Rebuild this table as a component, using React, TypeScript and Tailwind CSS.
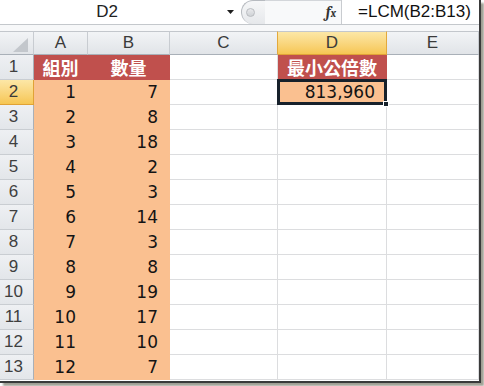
import React from 'react'

const data: [number, number][] = [
  [1, 7], [2, 8], [3, 18], [4, 2], [5, 3], [6, 14],
  [7, 3], [8, 8], [9, 19], [10, 17], [11, 10], [12, 7],
]

const latin = { fontFamily: '"Liberation Sans", Arial, sans-serif' }
const num = { fontFamily: '"DejaVu Sans", "Liberation Sans", sans-serif' }
const cjk = { fontFamily: '"Noto Sans CJK TC", "Noto Sans CJK SC", sans-serif' }

const headCell =
  'h-[24px] flex items-center justify-center border-t border-r border-b border-t-[#c3c7cc] border-r-[#c8ccd1] border-b-[#a9b0b8] bg-gradient-to-b from-[#f2f4f6] to-[#e1e4e8] text-[17px] text-[#3a3a3a]'
const headGold =
  'h-[24px] flex items-center justify-center border-t border-r border-b border-t-[#c3c7cc] border-r-[#e3a93c] border-b-[#e0a236] bg-gradient-to-b from-[#fce7a6] to-[#f6c652] text-[17px] text-[#3a3a3a]'
const rowHead =
  'h-[25px] flex items-center justify-center pr-[6px] border-r border-b border-r-[#a9b0b8] border-b-[#c9cdd2] bg-gradient-to-b from-[#eef0f3] to-[#e3e6ea] text-[17px] text-[#3f3f3f]'
const rowHeadGold =
  'h-[25px] flex items-center justify-center pr-[6px] border-r border-b border-r-[#e0a236] border-b-[#e0a236] bg-gradient-to-b from-[#fce7a6] to-[#f6c652] text-[17px] text-[#3a3a3a]'
const white = 'h-[25px] border-r border-b border-[#dcdddf] bg-white'
const orange =
  'h-[25px] flex items-center justify-end pr-[11px] pt-[1px] border-r border-b border-[#fac090] bg-[#fac090] text-[17px] text-[#141414]'
const red =
  'h-[25px] flex items-center justify-center border-r border-b border-[#c0504d] bg-[#c0504d] text-[18px] font-bold text-white'

export default function App() {
  return (
    <div className="w-[484px] h-[386px] bg-white overflow-hidden">
      <div className="w-[481px] h-[383px] border-r-2 border-b-2 border-[#3a3a3a] shadow-[3px_3px_2px_rgba(80,80,60,0.55)] bg-white">
        {/* formula bar */}
        <div className="flex h-[25px] border-b border-[#c4c8cc]" style={latin}>
          <div className="flex w-[241px] items-center">
            <span className="w-[214px] text-center text-[17px] text-[#222]">D2</span>
            <svg className="ml-[13px]" width="7" height="4" viewBox="0 0 7 4">
              <path d="M0 0h7L3.5 4z" fill="#1e1e1e" />
            </svg>
          </div>
          <div className="flex w-[101px] border-r border-[#c9ccd0]">
            <div className="flex w-[24px] items-center rounded-l-[12px] border-l border-t border-[#b7bbc0] bg-gradient-to-b from-[#f6f7f8] to-[#e6e8eb] pl-[4px]">
              <span className="h-[9px] w-[9px] rounded-full border border-[#b9bcc0] bg-gradient-to-b from-[#e9eaec] to-[#cfd2d6]" />
            </div>
            <div className="flex flex-1 items-center justify-end border-t border-[#d3d6da] bg-[#f8f9fa] pr-[5px]">
              <span className="font-serif text-[15px] font-bold italic text-[#333]">
                f<span className="text-[11px]">x</span>
              </span>
            </div>
          </div>
          <div className="flex flex-1 items-center pl-[16px] text-[17px] text-[#111]">=LCM(B2:B13)</div>
        </div>
        <div className="h-[6px] bg-[#f7f8f9]" />

        {/* sheet */}
        <div className="grid grid-cols-[34px_54px_82px_108px_109px_92px]">
          <div className={headCell + ' relative'}>
            <svg className="absolute right-[5px] bottom-[2px]" width="15" height="14" viewBox="0 0 15 14">
              <path d="M15 0V14H0z" fill="#c3c7cc" />
            </svg>
          </div>
          <div className={headCell} style={latin}>A</div>
          <div className={headCell} style={latin}>B</div>
          <div className={headCell + ' border-r-[#e3a93c]'} style={latin}>C</div>
          <div className={headGold} style={latin}>D</div>
          <div className={headCell} style={latin}>E</div>

          <div className={rowHead} style={latin}>1</div>
          <div className={red} style={cjk}>組別</div>
          <div className={red} style={cjk}>數量</div>
          <div className={white} />
          <div className={red} style={cjk}>最小公倍數</div>
          <div className={white} />

          {data.map(([g, q], i) => (
            <React.Fragment key={g}>
              <div className={i === 0 ? rowHeadGold : rowHead} style={latin}>{i + 2}</div>
              <div className={orange} style={num}>{g}</div>
              <div className={orange} style={num}>{q}</div>
              <div className={white} />
              {i === 0 ? (
                <div className={orange + ' relative'} style={num}>
                  813,960
                  <span className="absolute -left-[1px] -top-[1px] -right-[1px] -bottom-[1px] border-[3px] border-[#17212b]" />
                  <span className="absolute -right-[3px] -bottom-[3px] h-[6px] w-[6px] border border-white bg-[#17212b]" />
                </div>
              ) : (
                <div className={white} />
              )}
              <div className={white} />
            </React.Fragment>
          ))}
        </div>
      </div>
    </div>
  )
}
